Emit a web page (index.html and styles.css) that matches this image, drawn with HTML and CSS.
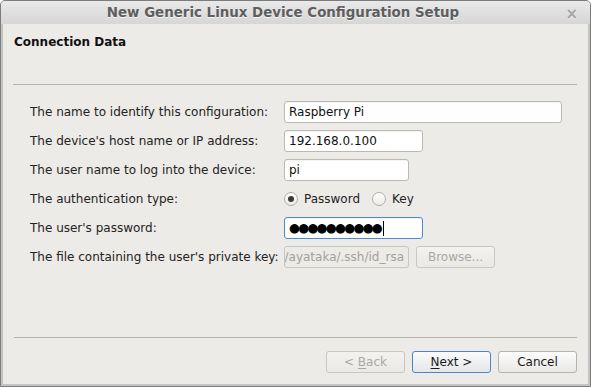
FILE: index.html
```html
<!DOCTYPE html>
<html>
<head>
<meta charset="utf-8">
<link rel="stylesheet" href="styles.css">
</head>
<body>
<div class="window">
  <div class="titlebar">
    <span class="title">New Generic Linux Device Configuration Setup</span>
    <span class="close">×</span>
  </div>
  <div class="content">
    <div class="page-header">
      <div class="page-title">Connection Data</div>
    </div>
    <div class="form">
      <div class="label">The name to identify this configuration:</div>
      <div class="field"><div class="input w-name">Raspberry Pi</div></div>

      <div class="label">The device's host name or IP address:</div>
      <div class="field"><div class="input w-host">192.168.0.100</div></div>

      <div class="label">The user name to log into the device:</div>
      <div class="field"><div class="input w-user">pi</div></div>

      <div class="label">The authentication type:</div>
      <div class="field radios">
        <span class="radio checked"></span><span class="radio-text">Password</span>
        <span class="radio"></span><span class="radio-text">Key</span>
      </div>

      <div class="label">The user's password:</div>
      <div class="field"><div class="input w-host focused"><span class="dots">●●●●●●●●●●</span><span class="caret"></span></div></div>

      <div class="label">The file containing the user's private key:</div>
      <div class="field">
        <div class="input w-user disabled"><span>/home/ayataka/.ssh/id_rsa</span></div>
        <div class="button disabled-btn browse"><span>Browse...</span></div>
      </div>
    </div>
    <div class="footer">
      <div class="buttons">
        <div class="button disabled-btn"><span>&lt; <u>B</u>ack</span></div>
        <div class="button default-btn"><span><u>N</u>ext &gt;</span></div>
        <div class="button"><span>Cancel</span></div>
      </div>
    </div>
  </div>
</div>
</body>
</html>
```

FILE: styles.css
```css
html, body {
  margin: 0;
  padding: 0;
  background: #ffffff;
}
body {
  font-family: "DejaVu Sans", sans-serif;
  font-size: 12px;
  color: #1a1a1a;
}
.window {
  width: 591px;
  height: 387px;
  box-sizing: border-box;
  border: 1px solid #7c7c7c;
  border-radius: 5px 5px 0 0;
  display: flex;
  flex-direction: column;
  overflow: hidden;
  background: #c6c4c1;
}
.titlebar {
  height: 23px;
  flex: none;
  background: linear-gradient(#e9e9e9, #d6d6d6);
  position: relative;
  display: flex;
  align-items: center;
  justify-content: center;
}
.title {
  font-weight: bold;
  font-size: 13.4px;
  color: #5e5e5e;
  text-shadow: 0 1px 0 #f4f4f4;
  margin-left: -25px;
}
.close {
  position: absolute;
  right: 12px;
  top: 4px;
  font-size: 15px;
  font-weight: bold;
  color: #a3a3a3;
  text-shadow: 0 1px 0 #f0f0f0;
}
.content {
  flex: 1;
  margin: 0 2px 2px 2px;
  background: #edebe7;
  display: flex;
  flex-direction: column;
}
.page-header {
  height: 60px;
  margin: 0 11px 0 10px;
  border-bottom: 1px solid #b7b3ad;
  box-sizing: content-box;
}
.page-title {
  font-weight: bold;
  padding: 11px 0 0 1px;
  line-height: 15px;
  color: #111;
}
.form {
  margin-top: 16px;
  padding-left: 27px;
  display: grid;
  grid-template-columns: 254px auto;
  grid-auto-rows: 22px;
  row-gap: 7px;
  align-items: center;
}
.form .label {
  color: #232323;
  white-space: nowrap;
}
.field {
  display: flex;
  align-items: center;
  gap: 7px;
  height: 22px;
}
.input {
  height: 22px;
  box-sizing: border-box;
  border: 1px solid #bcb8b2;
  border-radius: 3px;
  background: #ffffff;
  padding: 0 4px;
  display: flex;
  align-items: center;
  white-space: nowrap;
  overflow: hidden;
  color: #111;
  box-shadow: inset 0 1px 1px rgba(0,0,0,0.05);
}
.w-name { width: 278px; }
.w-host { width: 139px; }
.w-user { width: 125px; }
.focused {
  border-color: #4a8cd3;
}
.dots {
  font-size: 12.5px;
  letter-spacing: -1.7px;
  color: #000;
  line-height: 1;
}
.caret {
  display: inline-block;
  width: 1px;
  height: 15px;
  background: #000;
  margin-left: 2px;
}
.disabled {
  background: #edebe7;
  color: #a3a19e;
  justify-content: flex-end;
  border-color: #c9c5bf;
  box-shadow: none;
  padding: 0 4px 0 0;
}
.disabled span {
  flex: none;
}
.radios {
  gap: 0;
}
.radio {
  width: 14px;
  height: 14px;
  box-sizing: border-box;
  border: 1px solid #b2aea8;
  border-radius: 50%;
  background: linear-gradient(#ffffff, #ecebe9);
  display: inline-flex;
  align-items: center;
  justify-content: center;
  flex: none;
  margin-right: 6px;
}
.radio.checked::after {
  content: "";
  width: 6px;
  height: 6px;
  border-radius: 50%;
  background: #3a3a3a;
}
.radio-text {
  margin-right: 12px;
  color: #232323;
}
.button {
  width: 79px;
  height: 22px;
  box-sizing: border-box;
  border: 1px solid #b6b2ac;
  border-radius: 3px;
  background: linear-gradient(#fcfcfc, #e9e8e6);
  display: flex;
  align-items: center;
  justify-content: center;
  color: #1a1a1a;
  flex: none;
  white-space: pre;
}
.button u {
  text-underline-offset: 2px;
}
.disabled-btn {
  color: #aaa8a5;
  border-color: #cac6c0;
  background: linear-gradient(#f3f2f0, #ebe9e6);
}
.default-btn {
  border-color: #4e84c0;
  background: linear-gradient(#fbfbfb, #e4e6e8);
}
.footer {
  margin-top: auto;
  margin-left: 11px;
  margin-right: 11px;
  border-top: 1px solid #b7b3ad;
  padding: 13px 0 11px 0;
}
.buttons {
  display: flex;
  justify-content: flex-end;
  gap: 7px;
}
```
